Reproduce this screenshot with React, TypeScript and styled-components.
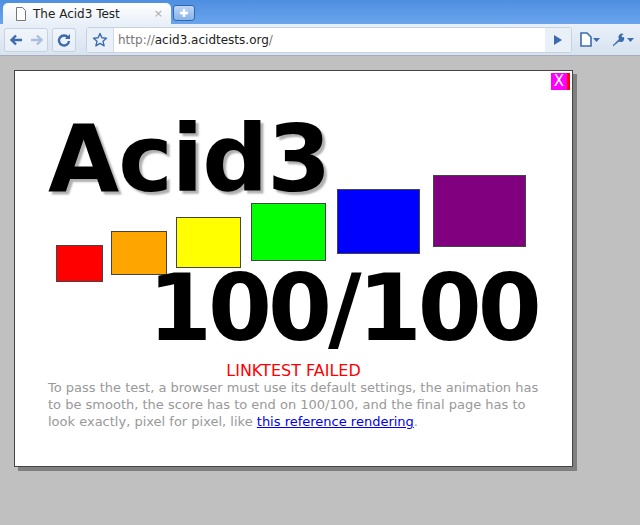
import React from "react";
import styled, { createGlobalStyle } from "styled-components";

const Global = createGlobalStyle`
  html, body { margin: 0; padding: 0; background: #c0c0c0; }
  body { font-family: "DejaVu Sans", sans-serif; }
`;

const Page = styled.div`
  width: 640px; height: 525px; display: flex; flex-direction: column; overflow: hidden;
`;
const TabBar = styled.div`
  height: 24px; background: linear-gradient(#4f8fe0, #6aa4ec);
  display: flex; align-items: flex-end; padding-left: 3px; gap: 2px;
`;
const Tab = styled.div`
  width: 168px; height: 21px; background: linear-gradient(#ffffff, #e9f0f8);
  border-radius: 5px 5px 0 0; display: flex; align-items: center; padding: 0 8px 0 12px;
  box-sizing: border-box; gap: 6px; font-size: 12px; color: #222;
`;
const TabTitle = styled.span` flex: 1; `;
const NewTab = styled.div`
  width: 20px; height: 14px; margin-bottom: 3px; border: 1px solid #2e68b0; border-radius: 3px;
  background: linear-gradient(#bcd6f5, #88b2e6); display: flex; align-items: center; justify-content: center;
`;
const Toolbar = styled.div`
  height: 32px; background: linear-gradient(#e9f0f8, #d8e3f1); border-bottom: 1px solid #aab;
  display: flex; align-items: center; padding: 0 4px; gap: 4px; box-sizing: border-box;
`;
const Btn = styled.div<{ w?: number }>`
  width: ${p => p.w ?? 22}px; height: 22px; display: flex; align-items: center; justify-content: center;
  border: 1px solid #c5d2e2; border-radius: 3px; background: rgba(255,255,255,0.4);
`;
const Plain = styled.div`
  width: 28px; height: 22px; display: flex; align-items: center; justify-content: center; gap: 1px;
`;
const Omni = styled.div`
  flex: 1; height: 24px; display: flex; align-items: center; border: 1px solid #c5d2e2; border-radius: 3px;
  background: #fff; overflow: hidden; margin-left: 6px;
`;
const Star = styled.div`
  width: 26px; height: 24px; display: flex; align-items: center; justify-content: center;
  background: #e9f0f8; border-right: 1px solid #d0dae8;
`;
const Url = styled.div`
  flex: 1; padding-left: 4px; font-size: 12px; color: #777; span { color: #222; }
`;
const Go = styled.div`
  width: 26px; height: 24px; display: flex; align-items: center; justify-content: center; background: #e9f0f8;
`;
const Content = styled.div`
  flex: 1; padding: 14px 0 0 14px;
`;
const Frame = styled.div`
  position: relative; width: 559px; height: 397px; box-sizing: border-box; background: #fff;
  border: 1px solid #444; box-shadow: 4px 4px 0 #808080; padding: 0 0 0 33px;
`;
const Close = styled.div`
  position: absolute; top: 2px; right: 2px; width: 16px; height: 17px; background: #f0f;
  border-right: 3px solid #f00; color: #fff; font-size: 15px; line-height: 17px; text-align: center;
`;
const Title = styled.h1`
  margin: 43px 0 0; font: bold 92px/1 "DejaVu Sans", sans-serif; letter-spacing: -1px;
  color: #000; text-shadow: 3px 3px 2px #b0b0b0; height: 98px;
`;
const Squares = styled.div`
  display: flex; align-items: flex-start; margin-top: -37px; height: 106px;
`;
const Sq = styled.div<{ c: string; w: number; h: number; t: number; ml: number }>`
  width: ${p => p.w}px; height: ${p => p.h}px; background: ${p => p.c};
  border: 1px solid #444; box-sizing: border-box; margin-top: ${p => p.t}px; margin-left: ${p => p.ml}px;
  flex: none;
`;
const Score = styled.div`
  margin: -18px 0 0 100px; font: bold 92px/1 "DejaVu Sans", sans-serif; letter-spacing: -4px; color: #000; height: 96px;
`;
const Fail = styled.div`
  text-align: center; color: #f00; font-size: 16px; margin: 2px 0 0 -33px; height: 18px;
`;
const Para = styled.p`
  margin: 0; color: #999; font-size: 13px; line-height: 17px; width: 500px;
  a { color: #00e; }
`;

const squares = [
  { c: "#f00", w: 47, h: 37, t: 70, ml: 8 },
  { c: "#ffa500", w: 56, h: 44, t: 56, ml: 8 },
  { c: "#ff0", w: 65, h: 51, t: 42, ml: 9 },
  { c: "#0f0", w: 75, h: 58, t: 28, ml: 10 },
  { c: "#00f", w: 83, h: 65, t: 14, ml: 11 },
  { c: "#800080", w: 93, h: 72, t: 0, ml: 13 },
];

export default function App() {
  return (
    <Page>
      <Global />
      <TabBar>
        <Tab>
          <svg width="12" height="14" viewBox="0 0 12 14"><path d="M1.5 .5h6l3 3v10h-9z" fill="#fff" stroke="#777" /></svg>
          <TabTitle>The Acid3 Test</TabTitle>
          <span style={{ color: "#aaa", fontSize: 11 }}>×</span>
        </Tab>
        <NewTab><svg width="10" height="10" viewBox="0 0 10 10"><path d="M5 1v8M1 5h8" stroke="#fff" strokeWidth="2.5" /></svg></NewTab>
      </TabBar>
      <Toolbar>
        <Btn w={42} style={{ justifyContent: "space-around" }}>
          <svg width="14" height="12" viewBox="0 0 14 12"><path d="M13 6H3M7 1.5 2.5 6 7 10.5" fill="none" stroke="#3c6cad" strokeWidth="2.4" /></svg>
          <svg width="14" height="12" viewBox="0 0 14 12"><path d="M1 6h10M7 1.5 11.5 6 7 10.5" fill="none" stroke="#a9bfdc" strokeWidth="2.4" /></svg>
        </Btn>
        <Btn>
          <svg width="14" height="14" viewBox="0 0 14 14"><path d="M11 4.5A5 5 0 1 0 12 8" fill="none" stroke="#3c6cad" strokeWidth="2.4" /><path d="M13 1v5H8z" fill="#3c6cad" /></svg>
        </Btn>
        <Omni>
          <Star><svg width="16" height="16" viewBox="0 0 16 16"><path d="M8 1.5l1.9 4.3 4.6.4-3.5 3 1.1 4.6L8 11.4l-4.1 2.4 1.1-4.6-3.5-3 4.6-.4z" fill="none" stroke="#3c6cad" strokeWidth="1.4" strokeLinejoin="round" /></svg></Star>
          <Url>http://<span>acid3.acidtests.org</span>/</Url>
          <Go><svg width="10" height="12" viewBox="0 0 10 12"><path d="M1 1l8 5-8 5z" fill="#3c6cad" /></svg></Go>
        </Omni>
        <Plain>
          <svg width="12" height="15" viewBox="0 0 12 15"><path d="M1 1h6l4 4v9H1z" fill="#fff" stroke="#3c6cad" strokeWidth="1.6" /></svg>
          <svg width="7" height="4" viewBox="0 0 7 4"><path d="M0 0h7L3.5 4z" fill="#3c6cad" /></svg>
        </Plain>
        <Plain>
          <svg width="15" height="15" viewBox="0 0 15 15"><path d="M2 13l6-6a3.5 3.5 0 0 1 4.5-5l-2 2 1 1.5L13 5a3.5 3.5 0 0 1-5 4.5l-6 5z" fill="#3c6cad" /></svg>
          <svg width="7" height="4" viewBox="0 0 7 4"><path d="M0 0h7L3.5 4z" fill="#3c6cad" /></svg>
        </Plain>
      </Toolbar>
      <Content>
        <Frame>
          <Close>X</Close>
          <Title>Acid3</Title>
          <Squares>
            {squares.map((s, i) => <Sq key={i} {...s} />)}
          </Squares>
          <Score>100/100</Score>
          <Fail>LINKTEST FAILED</Fail>
          <Para>
            To pass the test, a browser must use its default settings, the animation has to be smooth, the score has to end on 100/100, and the final page has to look exactly, pixel for pixel, like <a href="#">this reference rendering</a>.
          </Para>
        </Frame>
      </Content>
    </Page>
  );
}
